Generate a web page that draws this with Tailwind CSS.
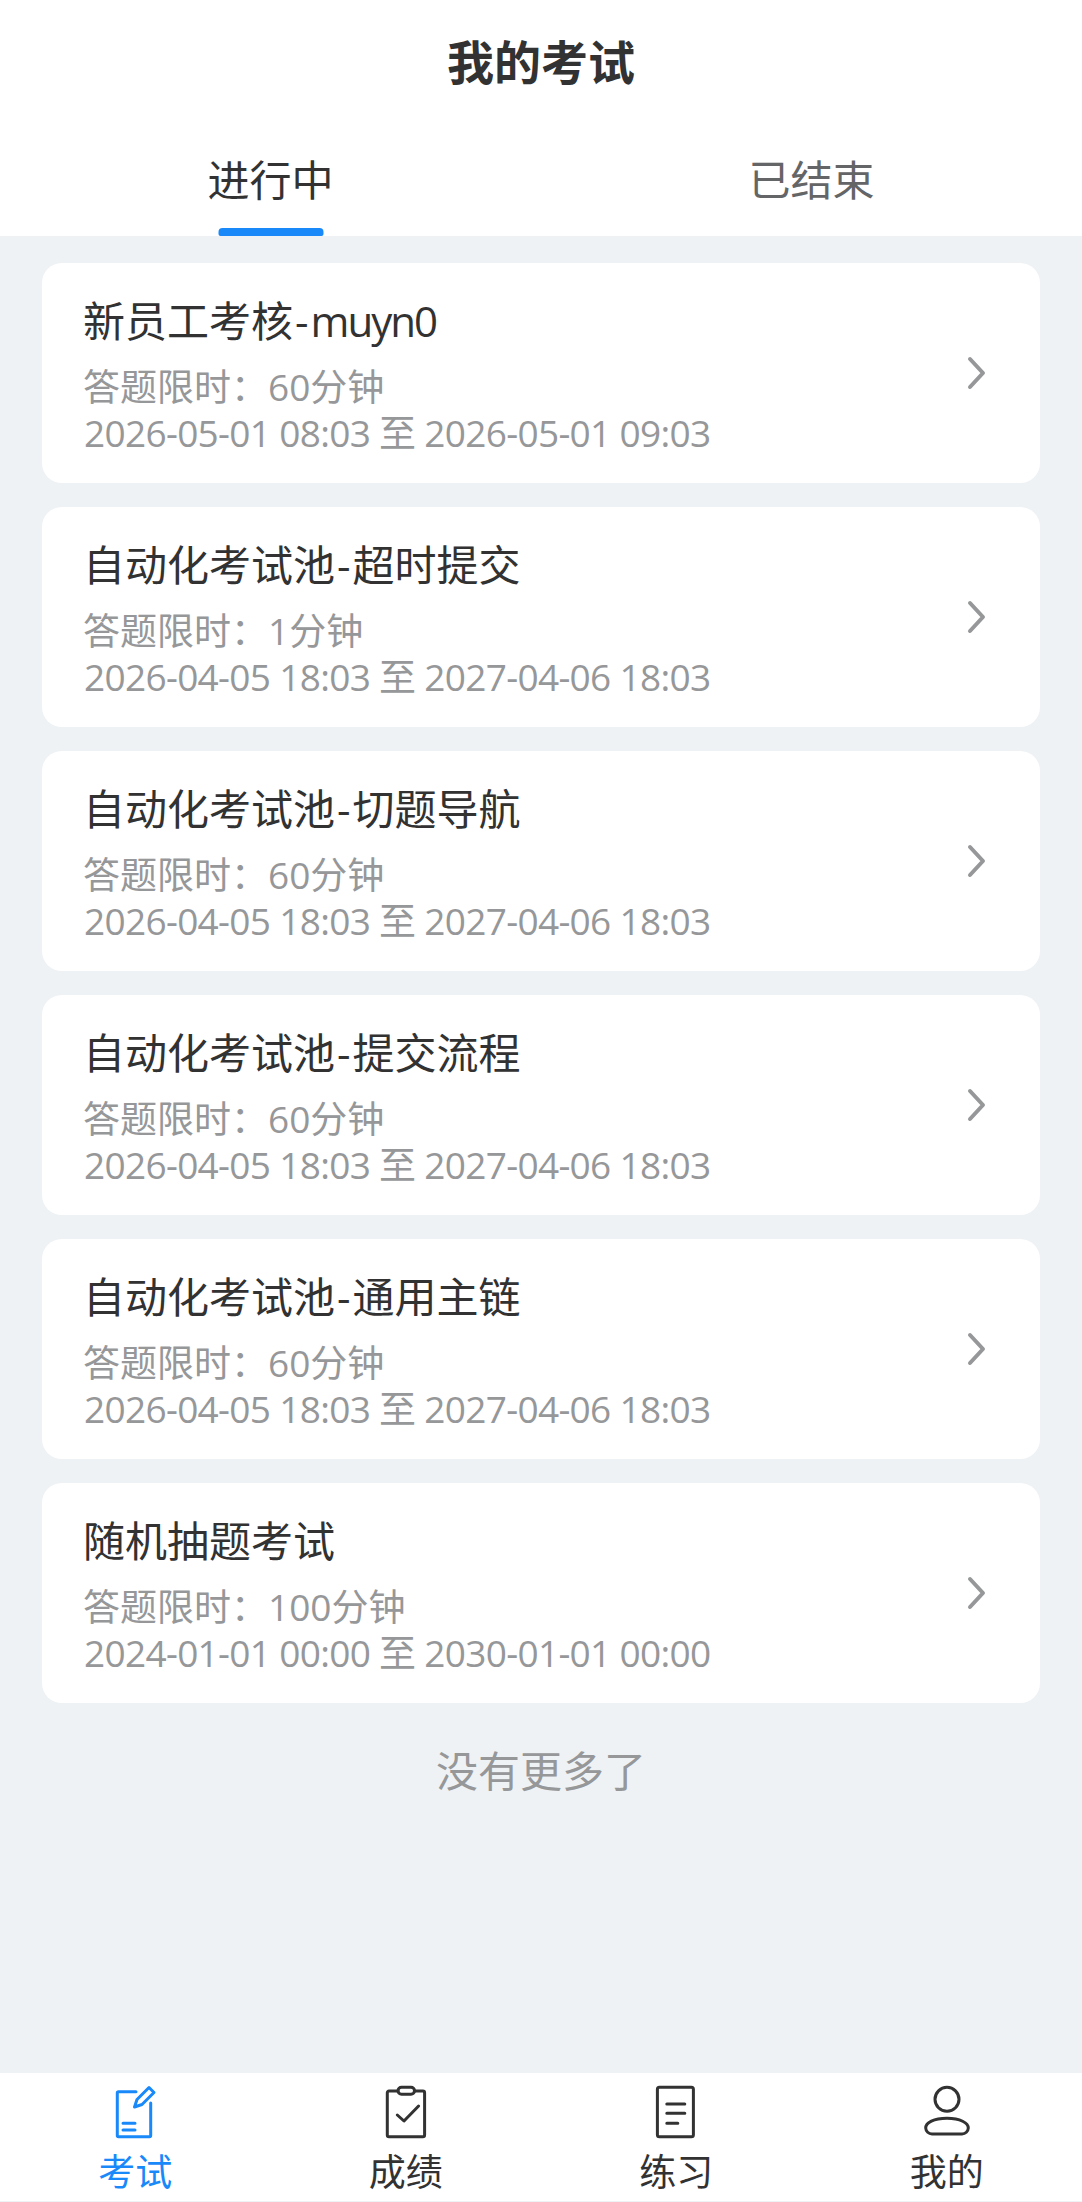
<!DOCTYPE html>
<html lang="zh-CN"><head><meta charset="utf-8"><script src="https://cdn.jsdelivr.net/npm/@tailwindcss/browser@4"></script></head>
<body class="m-0 bg-[#eff2f5] font-['Open_Sans','Noto_Sans_CJK_SC',sans-serif]">
<div class="w-[1082px] h-[2202px] flex flex-col overflow-hidden">
<header class="bg-white h-[236px] shrink-0 flex flex-col">
<h1 class="h-[125px] pb-[1px] flex items-center justify-center text-[47px] font-bold text-[#323233]">我的考试</h1>
<div class="flex flex-1">
<div class="relative flex-1 flex items-start justify-center text-[42px] leading-[56px] pt-[27px] text-[#323233]">进行中<span class="absolute bottom-0 left-1/2 -translate-x-1/2 w-[105px] h-[8px] rounded-t-[4px] rounded-b-[2px] bg-[#1989fa]"></span></div>
<div class="flex-1 flex items-start justify-center text-[42px] leading-[56px] pt-[27px] text-[#646566]">已结束</div>
</div>
</header>
<main class="flex-1 px-[42px] pt-[27px] flex flex-col gap-[24px]">
<a class="h-[220px] shrink-0 bg-white rounded-[20px] pl-[41px] pr-[52px] flex justify-between"><div class="pt-[28px]"><div class="text-[42px] leading-[60px] text-[#323233]">新员工考核<span class="px-[2px]">-</span><span class="tracking-[-2px]">muyn0</span></div><div class="text-[37px] leading-[48px] text-[#969799] mt-[12px]">答题限时&#xFF1A;60分钟</div><div class="text-[37px] leading-[44px] ml-[1px] tracking-[-0.68px] text-[#969799]">2026-05-01 08:03 至 2026-05-01 09:03</div></div><svg class="w-[24px] h-[40px] self-center" viewBox="0 0 24 40" fill="none" stroke="#969799" stroke-width="4" stroke-linecap="round" stroke-linejoin="round"><path d="M6 6l13 14L6 34"/></svg></a>
<a class="h-[220px] shrink-0 bg-white rounded-[20px] pl-[41px] pr-[52px] flex justify-between"><div class="pt-[28px]"><div class="text-[42px] leading-[60px] text-[#323233]">自动化考试池<span class="px-[2px]">-</span>超时提交</div><div class="text-[37px] leading-[48px] text-[#969799] mt-[12px]">答题限时&#xFF1A;1分钟</div><div class="text-[37px] leading-[44px] ml-[1px] tracking-[-0.68px] text-[#969799]">2026-04-05 18:03 至 2027-04-06 18:03</div></div><svg class="w-[24px] h-[40px] self-center" viewBox="0 0 24 40" fill="none" stroke="#969799" stroke-width="4" stroke-linecap="round" stroke-linejoin="round"><path d="M6 6l13 14L6 34"/></svg></a>
<a class="h-[220px] shrink-0 bg-white rounded-[20px] pl-[41px] pr-[52px] flex justify-between"><div class="pt-[28px]"><div class="text-[42px] leading-[60px] text-[#323233]">自动化考试池<span class="px-[2px]">-</span>切题导航</div><div class="text-[37px] leading-[48px] text-[#969799] mt-[12px]">答题限时&#xFF1A;60分钟</div><div class="text-[37px] leading-[44px] ml-[1px] tracking-[-0.68px] text-[#969799]">2026-04-05 18:03 至 2027-04-06 18:03</div></div><svg class="w-[24px] h-[40px] self-center" viewBox="0 0 24 40" fill="none" stroke="#969799" stroke-width="4" stroke-linecap="round" stroke-linejoin="round"><path d="M6 6l13 14L6 34"/></svg></a>
<a class="h-[220px] shrink-0 bg-white rounded-[20px] pl-[41px] pr-[52px] flex justify-between"><div class="pt-[28px]"><div class="text-[42px] leading-[60px] text-[#323233]">自动化考试池<span class="px-[2px]">-</span>提交流程</div><div class="text-[37px] leading-[48px] text-[#969799] mt-[12px]">答题限时&#xFF1A;60分钟</div><div class="text-[37px] leading-[44px] ml-[1px] tracking-[-0.68px] text-[#969799]">2026-04-05 18:03 至 2027-04-06 18:03</div></div><svg class="w-[24px] h-[40px] self-center" viewBox="0 0 24 40" fill="none" stroke="#969799" stroke-width="4" stroke-linecap="round" stroke-linejoin="round"><path d="M6 6l13 14L6 34"/></svg></a>
<a class="h-[220px] shrink-0 bg-white rounded-[20px] pl-[41px] pr-[52px] flex justify-between"><div class="pt-[28px]"><div class="text-[42px] leading-[60px] text-[#323233]">自动化考试池<span class="px-[2px]">-</span>通用主链</div><div class="text-[37px] leading-[48px] text-[#969799] mt-[12px]">答题限时&#xFF1A;60分钟</div><div class="text-[37px] leading-[44px] ml-[1px] tracking-[-0.68px] text-[#969799]">2026-04-05 18:03 至 2027-04-06 18:03</div></div><svg class="w-[24px] h-[40px] self-center" viewBox="0 0 24 40" fill="none" stroke="#969799" stroke-width="4" stroke-linecap="round" stroke-linejoin="round"><path d="M6 6l13 14L6 34"/></svg></a>
<a class="h-[220px] shrink-0 bg-white rounded-[20px] pl-[41px] pr-[52px] flex justify-between"><div class="pt-[28px]"><div class="text-[42px] leading-[60px] text-[#323233]">随机抽题考试</div><div class="text-[37px] leading-[48px] text-[#969799] mt-[12px]">答题限时&#xFF1A;100分钟</div><div class="text-[37px] leading-[44px] ml-[1px] tracking-[-0.68px] text-[#969799]">2024-01-01 00:00 至 2030-01-01 00:00</div></div><svg class="w-[24px] h-[40px] self-center" viewBox="0 0 24 40" fill="none" stroke="#969799" stroke-width="4" stroke-linecap="round" stroke-linejoin="round"><path d="M6 6l13 14L6 34"/></svg></a>
<div class="text-center text-[42px] leading-[60px] text-[#969799] mt-[14px]">没有更多了</div>
</main>
<nav class="h-[128px] mb-[1px] bg-white shrink-0 grid grid-cols-4 text-[37px] leading-[48px] text-[#323233]">
<div class="flex flex-col items-center pt-[12px] text-[#1989fa]"><svg class="w-[54px] h-[54px] mb-[9px]" viewBox="0 0 54 54" fill="none" stroke="#1989fa" stroke-width="3" stroke-linecap="round" stroke-linejoin="round"><path d="M28 6.700H10.500a1.200 1.200 0 0 0-1.200 1.200v42.600a1.200 1.200 0 0 0 1.200 1.200h31a1.200 1.200 0 0 0 1.200-1.200V18"/><path d="M26.500 22l2.500-7.500L41 2.500l5 5L34 19.500z"/><path d="M15 38.300h12M15 45h12"/></svg>考试</div>
<div class="flex flex-col items-center pt-[12px]"><svg class="w-[54px] h-[54px] mb-[9px]" viewBox="0 0 54 54" fill="none" stroke="#323233" stroke-width="3" stroke-linecap="round" stroke-linejoin="round"><path d="M19 6H10a1.700 1.700 0 0 0-1.700 1.700v42.300a1.700 1.700 0 0 0 1.700 1.700h33.900a1.700 1.700 0 0 0 1.700-1.700V7.700A1.700 1.700 0 0 0 43.900 6H35.500"/><rect x="19" y="2.300" width="16.500" height="7" rx="3.500"/><path d="M18.300 30l6.700 6 14.600-15"/></svg>成绩</div>
<div class="flex flex-col items-center pt-[12px]"><svg class="w-[54px] h-[54px] mb-[9px]" viewBox="0 0 54 54" fill="none" stroke="#323233" stroke-width="3" stroke-linecap="round" stroke-linejoin="round"><rect x="8.400" y="2.300" width="36" height="49.400" rx="2"/><path d="M17.800 19h18M17.800 28.300h18M17.800 38.300h11"/></svg>练习</div>
<div class="flex flex-col items-center pt-[12px]"><svg class="w-[54px] h-[54px] mb-[9px]" viewBox="0 0 54 54" fill="none" stroke="#323233" stroke-width="3" stroke-linecap="round" stroke-linejoin="round"><circle cx="27" cy="14.300" r="12"/><path d="M12 49h30a6.300 6.300 0 0 0 6.300-6c0-5-8-9.700-21.300-9.700S5.700 37.500 5.700 43a6.300 6.300 0 0 0 6.300 6z"/></svg>我的</div>
</nav>
</div>
</body></html>
